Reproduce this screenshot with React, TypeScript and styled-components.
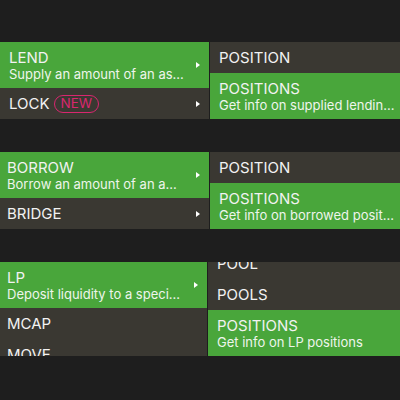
import styled, { createGlobalStyle } from 'styled-components'

const GlobalStyle = createGlobalStyle`
  html, body {
    margin: 0;
    padding: 0;
    background: #1e1e1e;
  }
  body {
    font-family: Inter, 'Noto Sans', sans-serif;
    color: #f2f2f2;
    -webkit-font-smoothing: antialiased;
  }
`

const GREEN = '#49a63b'
const DARK = '#3a3832'

const Page = styled.div`
  width: 400px;
  height: 400px;
  overflow: hidden;
  padding-top: 42px;
  box-sizing: border-box;
  display: flex;
  flex-direction: column;
  gap: 33px;
`

const Scene = styled.div<{ $leftWidth: number }>`
  display: grid;
  grid-template-columns: ${({ $leftWidth }) => $leftWidth}px 204px;
  column-gap: 1px;
  align-items: start;
`

const Menu = styled.div<{ $maxHeight?: number; $alignEnd?: boolean }>`
  display: flex;
  flex-direction: column;
  background: ${DARK};
  overflow: hidden;
  ${({ $maxHeight }) => ($maxHeight ? `height: ${$maxHeight}px;` : '')}
  justify-content: ${({ $alignEnd }) => ($alignEnd ? 'flex-end' : 'flex-start')};
`

const Row = styled.div<{ $active?: boolean; $inset: number }>`
  flex-shrink: 0;
  display: flex;
  align-items: center;
  gap: 12px;
  min-height: 31px;
  box-sizing: border-box;
  padding: 6px 9px 6px ${({ $inset }) => $inset}px;
  background: ${({ $active }) => ($active ? GREEN : DARK)};
`

const Texts = styled.div`
  flex: 1;
  min-width: 0;
  display: flex;
  flex-direction: column;
`

const Title = styled.div`
  display: flex;
  align-items: center;
  gap: 4px;
  font-size: 15px;
  line-height: 19px;
  white-space: nowrap;
`

const Subtitle = styled.div`
  font-size: 13px;
  line-height: 15px;
  color: #eef5ec;
  white-space: nowrap;
  overflow: hidden;
  text-overflow: ellipsis;
`

const Badge = styled.span`
  display: inline-flex;
  align-items: center;
  height: 18px;
  box-sizing: border-box;
  padding: 0 6px;
  border: 1.5px solid #d8276f;
  border-radius: 9px;
  color: #d8276f;
  font-size: 13.5px;
  line-height: 1;
`

const Caret = styled.svg`
  flex-shrink: 0;
  width: 4px;
  height: 6px;
`

function Chevron() {
  return (
    <Caret viewBox="0 0 4 6">
      <polygon points="0,0 4,3 0,6" fill="#ffffff" />
    </Caret>
  )
}

type Item = { title: string; sub?: string; active?: boolean; badge?: string; more?: boolean }

function MenuList({
  items,
  inset,
  height,
  alignEnd,
}: {
  items: Item[]
  inset: number
  height?: number
  alignEnd?: boolean
}) {
  return (
    <Menu $maxHeight={height} $alignEnd={alignEnd}>
      {items.map((it) => (
        <Row key={it.title} $active={it.active} $inset={inset}>
          <Texts>
            <Title>
              {it.title}
              {it.badge && <Badge>{it.badge}</Badge>}
            </Title>
            {it.sub && <Subtitle>{it.sub}</Subtitle>}
          </Texts>
          {it.more && <Chevron />}
        </Row>
      ))}
    </Menu>
  )
}

export default function App() {
  return (
    <>
      <GlobalStyle />
      <Page>
        <Scene $leftWidth={209}>
          <MenuList
            inset={9}
            items={[
              { title: 'LEND', sub: 'Supply an amount of an as...', active: true, more: true },
              { title: 'LOCK', badge: 'NEW', more: true },
            ]}
          />
          <MenuList
            inset={9}
            items={[
              { title: 'POSITION' },
              { title: 'POSITIONS', sub: 'Get info on supplied lendin...', active: true },
            ]}
          />
        </Scene>
        <Scene $leftWidth={209}>
          <MenuList
            inset={7}
            items={[
              { title: 'BORROW', sub: 'Borrow an amount of an a...', active: true, more: true },
              { title: 'BRIDGE', more: true },
            ]}
          />
          <MenuList
            inset={9}
            items={[
              { title: 'POSITION' },
              { title: 'POSITIONS', sub: 'Get info on borrowed posit...', active: true },
            ]}
          />
        </Scene>
        <Scene $leftWidth={207}>
          <MenuList
            inset={7}
            height={94}
            items={[
              { title: 'LP', sub: 'Deposit liquidity to a speci...', active: true, more: true },
              { title: 'MCAP' },
              { title: 'MOVE' },
            ]}
          />
          <MenuList
            inset={9}
            height={94}
            alignEnd
            items={[
              { title: 'POOL' },
              { title: 'POOLS' },
              { title: 'POSITIONS', sub: 'Get info on LP positions', active: true },
            ]}
          />
        </Scene>
      </Page>
    </>
  )
}
